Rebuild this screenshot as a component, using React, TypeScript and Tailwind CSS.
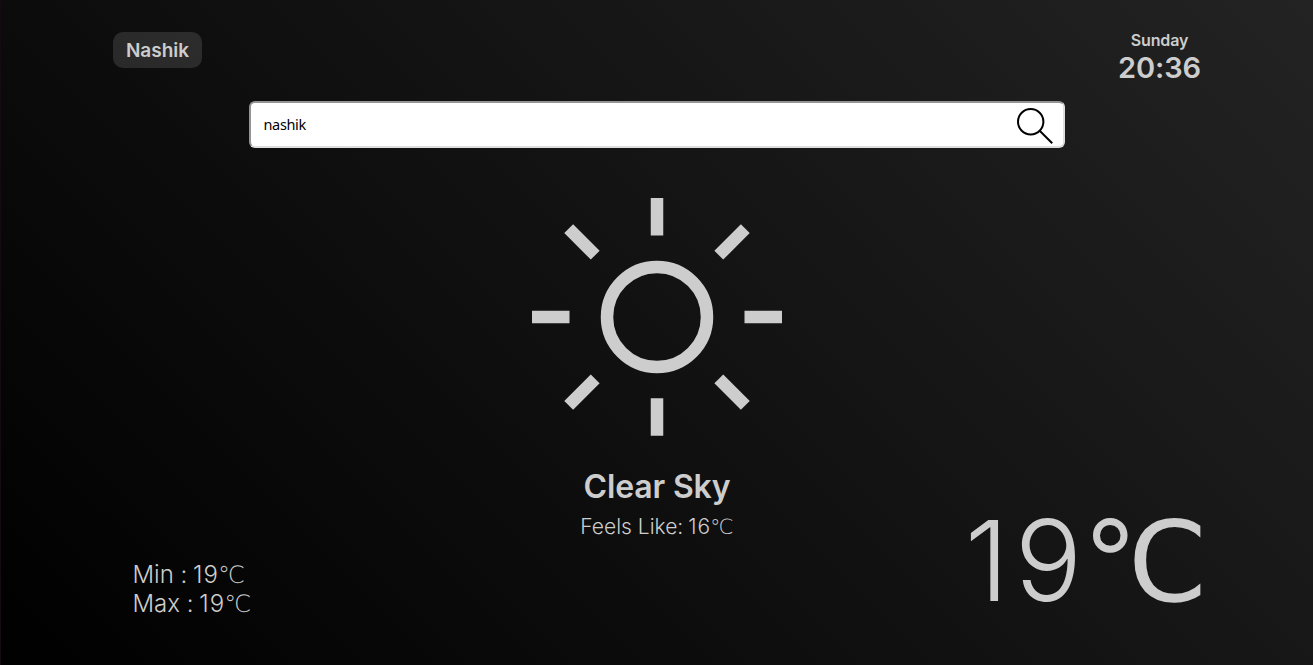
const RAYS = [0, 90, 180, 270];

function Sun() {
  return (
    <svg className="mt-[46px] h-[246px] w-[250px] shrink-0 self-center" viewBox="-125 -123 250 246" fill="none" stroke="#cdcdcd" strokeWidth="12.5">
      <circle r="50" />
      <path d="M-125 0h37.5M87.5 0h37.5M0-119v37.5M0 81.25v37.5" />
      {RAYS.map((angle) => (
        <path key={angle} d="M61.8-61.8 88.3-88.3" transform={`rotate(${angle})`} />
      ))}
    </svg>
  );
}

function Search() {
  return (
    <div className="mx-auto mt-[19px] flex h-[47px] w-[816px] shrink-0 items-center justify-between rounded-md border-2 border-t-[#949494] border-r-[#dedede] border-b-[#dedede] border-l-[#949494] bg-white pr-[9px] pl-[12.5px]">
      <span className="pb-0.5 font-['Noto_Sans',sans-serif] text-[14.5px] leading-5 tracking-[-0.35px] text-black">nashik</span>
      <svg className="h-[38px] w-[38px]" viewBox="0 0 38 38" fill="none" stroke="#000" strokeWidth="2">
        <circle cx="14.7" cy="15.8" r="12.7" />
        <path d="M23.7 24.8 36.2 37.3" />
      </svg>
    </div>
  );
}

function Celsius({ className }: { className: string }) {
  return <span className={className}>℃</span>;
}

const THIN = "font-['DejaVu_Sans',sans-serif] leading-none font-extralight";

export default function App() {
  return (
    <main className="flex h-[665px] w-full flex-col overflow-hidden border-l border-[#120b11] bg-[linear-gradient(45deg,#000,#232323)] font-['Inter',sans-serif] text-[#cdcdcd]">
      <header className="flex h-[82px] shrink-0 justify-between pr-[112px] pl-[112px]">
        <div className="mt-8 flex h-9 w-[89px] items-center justify-center rounded-[10px] bg-white/12 text-[19px] leading-6 font-semibold"><span className="pt-px">Nashik</span></div>
        <div className="mt-[30px] text-center">
          <div className="text-[16px] leading-5 font-semibold tracking-[-0.1px]">Sunday</div>
          <div className="text-[29px] leading-[35px] font-semibold tracking-[-0.1px]">20:36</div>
        </div>
      </header>
      <Search />
      <Sun />
      <section className="flex h-[225px] shrink-0 justify-between">
        <div className="w-[400px] pt-[120px] pl-[131.5px] text-[24px] leading-[29px] font-light">
          <div className="whitespace-nowrap">Min :<span className="-ml-px"> </span><span className="tracking-[1px]">1</span>9<Celsius className={THIN} /></div>
          <div className="whitespace-nowrap">Max :<span className="-ml-px"> </span><span className="tracking-[1px]">1</span>9<Celsius className={THIN} /></div>
        </div>
        <div className="pt-[27px] text-center">
          <h1 className="text-[32px] leading-10 font-semibold tracking-[-0.15px]">Clear Sky</h1>
          <p className="mt-[7px] text-[21px] leading-[26px] font-light">Feels Like:<span className="-ml-px"> </span><span className="tracking-[1px]">1</span>6<Celsius className={THIN} /></p>
        </div>
        <div className="w-[400px] pt-[50px] pr-[105px] text-right text-[112px] leading-[140px] font-light whitespace-nowrap">
          <span className="tracking-[6px]">1</span>9<Celsius className="font-['DejaVu_Sans',sans-serif] font-normal" />
        </div>
      </section>
    </main>
  );
}
